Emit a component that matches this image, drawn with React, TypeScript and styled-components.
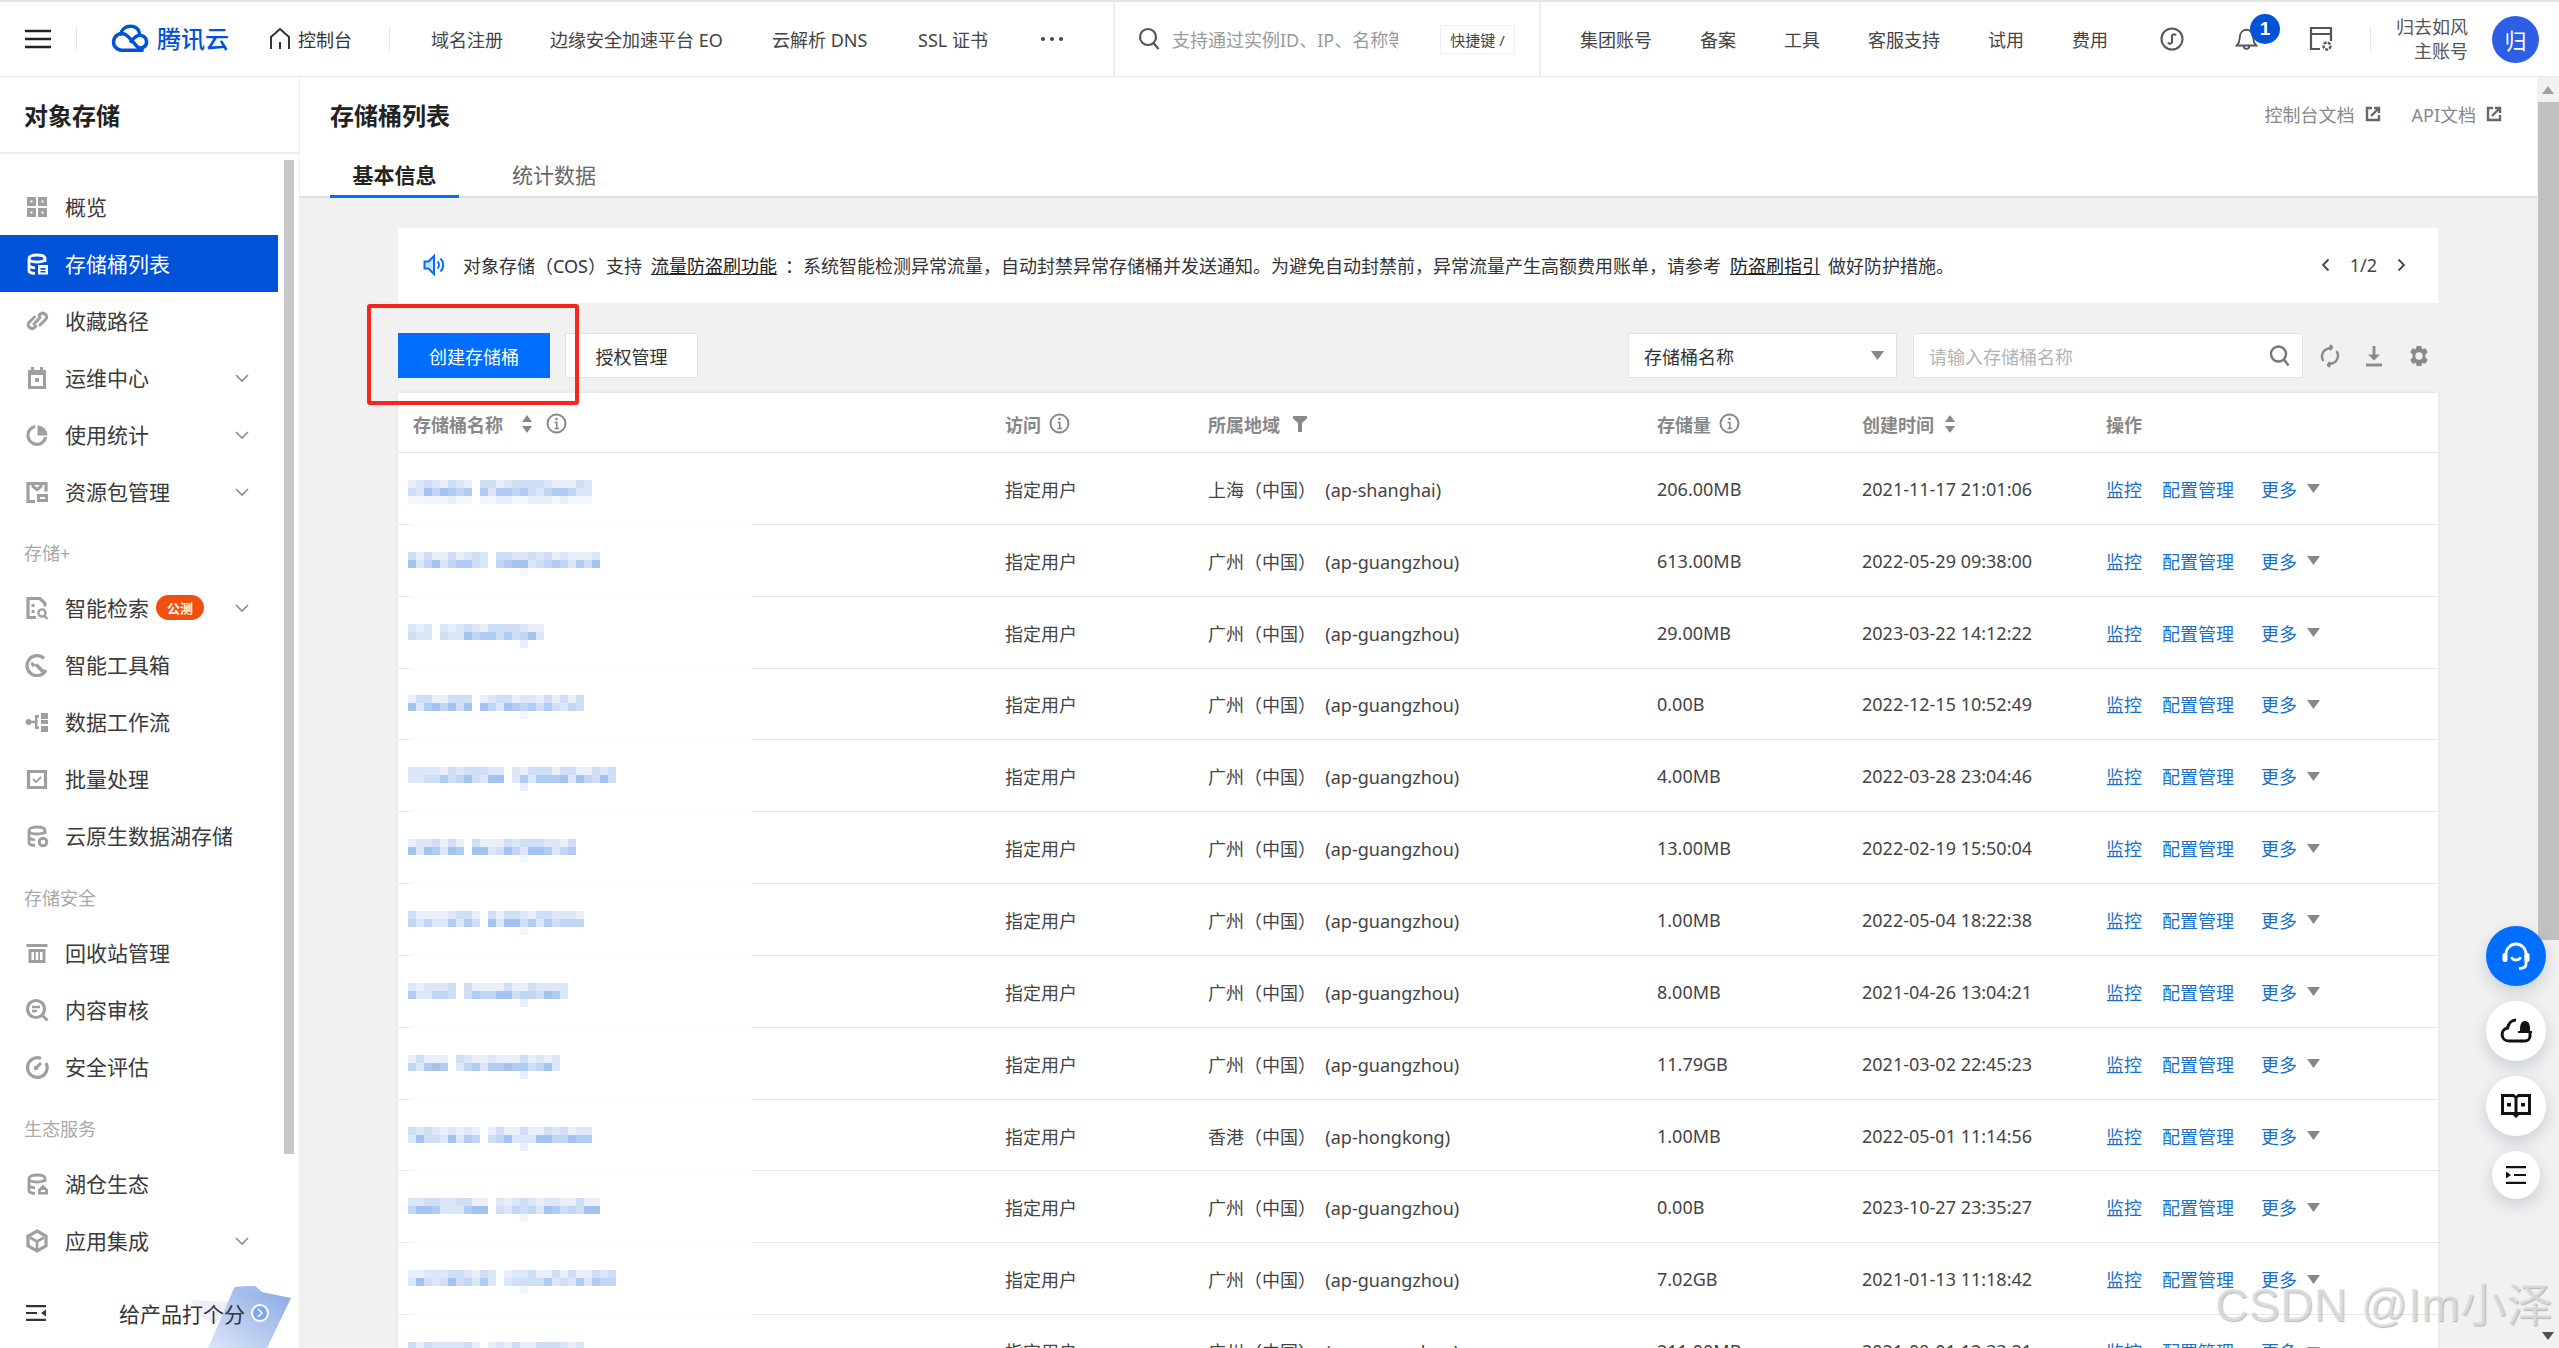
import React from "react";
import styled, { createGlobalStyle } from "styled-components";

const FONT = `"Noto Sans", "Noto Sans CJK SC", sans-serif`;

const Global = createGlobalStyle`
  html, body { margin: 0; padding: 0; height: 100%; overflow: hidden; background: #fff; }
  body { font-family: ${FONT}; color: #333; }
  * { box-sizing: border-box; }
`;

const Page = styled.div`
  width: 2559px; height: 1348px; display: flex; flex-direction: column; overflow: hidden; position: relative;
`;
const TopStrip = styled.div` height: 2px; background: #e4e4e4; flex: none; `;
const TopBar = styled.header`
  height: 75px; flex: none; display: flex; align-items: center; border-bottom: 1px solid #e9e9e9; background: #fff; font-size: 18px; color: #444;
`;
const MenuBtn = styled.div` width: 76px; display: flex; justify-content: center; color: #222; `;
const Sep = styled.div<{ $ml?: number }>` width: 1px; height: 24px; background: #e8e8e8; margin-left: ${p => p.$ml ?? 0}px; flex: none; `;
const Logo = styled.div` width: 118px; display: flex; align-items: center; margin-left: 34px; gap: 7px; color: #0052d9; font-size: 24px; font-weight: 500; line-height: 1; white-space: nowrap; `;
const HomeLink = styled.div` display: flex; align-items: center; gap: 7px; margin-left: 40px; color: #333; `;
const NavLinks = styled.nav` width: 682px; flex: none; display: flex; align-items: center; margin-left: 41px; white-space: nowrap; `;
const NavLink = styled.span<{ $w: number }>` width: ${p => p.$w}px; flex: none; `;
const Dots = styled.span` display: inline-flex; gap: 5px; margin-left: 2px; i { width: 4px; height: 4px; border-radius: 50%; background: #444; } `;
const SearchZone = styled.div`
  width: 428px; height: 74px; flex: none; border-left: 2px solid #eee; border-right: 2px solid #eee; display: flex; align-items: center; padding-left: 23px; color: #555;
`;
const SearchText = styled.div` width: 226px; margin-left: 12px; overflow: hidden; white-space: nowrap; color: #999; `;
const KeyBox = styled.div` margin-left: 42px; width: 75px; height: 29px; border: 1px solid #eee; font-size: 15px; display: flex; align-items: center; justify-content: center; color: #444; white-space: nowrap; `;
const RightLinks = styled.div` display: flex; align-items: center; gap: 48px; margin-left: 39px; white-space: nowrap; `;
const IconTools = styled.div` display: flex; align-items: center; gap: 51px; margin-left: 52px; color: #555; `;
const BellWrap = styled.div` position: relative; display: flex; `;
const Badge = styled.span`
  position: absolute; left: 15px; top: -13px; width: 30px; height: 30px; border-radius: 50%; background: #0052d9; color: #fff; font-size: 19px; font-weight: 700; display: flex; align-items: center; justify-content: center; font-family: "Liberation Sans", sans-serif;
`;
const UserName = styled.div` margin-left: 25px; width: 72px; text-align: right; line-height: 24px; color: #555; `;
const Avatar = styled.div` margin-left: 24px; width: 47px; height: 47px; border-radius: 50%; background: #2f5ee6; color: #fff; font-size: 22px; display: flex; align-items: center; justify-content: center; `;

const Body = styled.div` flex: 1; display: flex; min-height: 0; `;
const Sidebar = styled.aside` width: 300px; flex: none; display: flex; flex-direction: column; border-right: 1px solid #eee; background: #fff; position: relative; overflow: hidden; `;
const SideHead = styled.div` height: 77px; flex: none; border-bottom: 2px solid #ececec; padding: 0 0 1px 24px; display: flex; align-items: center; font-size: 24px; font-weight: 700; color: #222; `;
const NavRow = styled.div` flex: 1; display: flex; min-height: 0; `;
const NavList = styled.div` width: 278px; flex: none; padding-top: 24px; `;
const SideThumb = styled.div` width: 10px; height: 994px; margin: 6px 0 0 6px; background: #c9c9c9; flex: none; `;
const NavItem = styled.div<{ $active?: boolean }>`
  height: 57px; display: flex; align-items: center; padding: 0 28px 0 26px; font-size: 21px; white-space: nowrap;
  background: ${p => (p.$active ? "#0052d9" : "transparent")};
  color: ${p => (p.$active ? "#fff" : "#3a3a3a")};
  svg.nav { color: ${p => (p.$active ? "#fff" : "#9f9f9f")}; }
`;
const NavLabel = styled.span` position: relative; top: -1px; `;
const NavIconBox = styled.svg` width: 24px; height: 24px; flex: none; margin-right: 16px; margin-left: -1px; `;
const NavChevron = styled.svg` width: 16px; height: 10px; margin-left: auto; color: #8c8c8c; flex: none; `;
const GroupLabel = styled.div<{ $h: number }>` height: ${p => p.$h}px; padding: 5px 0 0 24px; display: flex; align-items: center; font-size: 18px; color: #a9a9a9; `;
const Beta = styled.span` margin-left: 7px; width: 48px; height: 25px; border-radius: 13px; background: #ef4f10; color: #fff; font-size: 13px; font-weight: 700; display: flex; align-items: center; justify-content: center; `;
const SideFoot = styled.div` height: 70px; flex: none; display: flex; align-items: center; padding-left: 26px; position: relative; color: #333; font-size: 21px; `;
const FootMenu = styled.svg` position: relative; flex: none; `;
const FootLabel = styled.span` margin-left: 73px; position: relative; white-space: nowrap; `;
const FootArrow = styled.span` position: relative; margin-left: 6px; width: 18px; height: 18px; border-radius: 50%; border: 2px solid #fff; background: #7ea6ee; color: #fff; display: flex; align-items: center; justify-content: center; `;
const FootArt = styled.svg` position: absolute; left: 170px; top: 0; width: 129px; height: 70px; `;

const Main = styled.main` flex: 1; min-width: 0; background: #f1f1f1; display: flex; flex-direction: column; `;
const MainHead = styled.div` flex: none; background: #fff; border-bottom: 2px solid #dedede; height: 121px; display: flex; flex-direction: column; `;
const TitleRow = styled.div` height: 76px; flex: none; display: flex; align-items: center; padding: 0 35px 2px 30px; `;
const PageTitle = styled.h1` margin: 0; font-size: 24px; font-weight: 700; color: #222; `;
const DocLinks = styled.div` margin-left: auto; display: flex; align-items: center; gap: 31px; font-size: 18px; color: #888; `;
const DocLink = styled.span` display: flex; align-items: center; gap: 10px; `;
const Tabs = styled.div` flex: 1; display: flex; padding-left: 30px; `;
const Tab = styled.div<{ $active?: boolean }>`
  width: ${p => (p.$active ? 129 : 130)}px; margin-left: ${p => (p.$active ? 0 : 30)}px; height: 45px; display: flex; align-items: center; justify-content: center; font-size: 21px;
  font-weight: ${p => (p.$active ? 700 : 400)};
  color: ${p => (p.$active ? "#222" : "#666")};
  border-bottom: 3px solid ${p => (p.$active ? "#006eff" : "transparent")};
`;
const Content = styled.div` flex: 1; min-height: 0; padding: 30px 99px 0 98px; overflow: hidden; `;
const Notice = styled.div` height: 75px; background: #fff; display: flex; align-items: center; padding: 0 32px 2px 25px; font-size: 18px; color: #333; white-space: nowrap; `;
const NoticeText = styled.span` margin-left: 16px; a { color: #222; text-decoration: underline; margin: 0 8px 0 9px; } `;
const Pager = styled.div` margin-left: auto; display: flex; align-items: center; gap: 20px; color: #444; `;
const Toolbar = styled.div` margin-top: 30px; height: 45px; display: flex; align-items: center; position: relative; font-size: 18px; `;
const Highlight = styled.div` position: absolute; left: -31px; top: -29px; width: 212px; height: 101px; border: 4px solid #f4261e; border-radius: 3px; z-index: 3; pointer-events: none; `;
const PrimaryBtn = styled.div` width: 152px; height: 45px; background: #006eff; color: #fff; display: flex; align-items: center; justify-content: center; `;
const GhostBtn = styled.div` margin-left: 15px; width: 133px; height: 45px; background: #fff; border: 1px solid #e3e3e3; display: flex; align-items: center; justify-content: center; color: #333; `;
const SelectBox = styled.div` margin-left: auto; width: 269px; height: 45px; background: #fff; border: 1px solid #e3e3e3; display: flex; align-items: center; padding: 0 12px 0 15px; justify-content: space-between; color: #333; `;
const SearchBox = styled.div` margin-left: 16px; width: 390px; height: 45px; background: #fff; border: 1px solid #e3e3e3; display: flex; align-items: center; padding: 0 12px 0 15px; justify-content: space-between; color: #b4b4b4; `;
const ToolIcons = styled.div` margin: 0 8px 0 17px; display: flex; align-items: center; gap: 24px; color: #8a8a8a; `;
const TriDown = styled.svg` width: 13px; height: 9px; color: #888; flex: none; `;

const COLS = "592px 203px 449px 205px 244px 347px";
const Table = styled.div` margin-top: 15px; background: #fff; box-shadow: 0 0 4px rgba(0,0,0,.08); `;
const HeadRow = styled.div` height: 60px; display: grid; grid-template-columns: ${COLS}; align-items: center; border-bottom: 1px solid #e2e2e2; font-size: 18px; font-weight: 700; color: #888; `;
const HeadCell = styled.div` display: flex; align-items: center; padding: 2px 0 0 15px; white-space: nowrap; `;
const HeadIcon = styled.svg<{ $ml: number }>` margin-left: ${p => p.$ml}px; color: #888; flex: none; `;
const Row = styled.div`
  height: 71.85px; display: grid; grid-template-columns: ${COLS}; align-items: center; font-size: 18px; color: #444;
  background: linear-gradient(to right, #e6e6e6 12px, #fafafa 12px, #fafafa 354px, #e6e6e6 354px) left bottom / 100% 1px no-repeat;
`;
const Cell = styled.div` padding-left: 15px; white-space: nowrap; `;
const NameCell = styled.div` padding: 6px 0 0 10px; display: flex; align-items: center; `;
const Ops = styled.div` padding-left: 15px; display: flex; align-items: center; color: #1a6fc9; white-space: nowrap; `;
const OpLink = styled.span<{ $ml?: number }>` margin-left: ${p => p.$ml ?? 0}px; `;
const MoreTri = styled(TriDown)` margin-left: 10px; `;

const Scroll = styled.div` width: 22px; flex: none; background: #f1f1f1; display: flex; flex-direction: column; align-items: center; `;
const ScrollBtn = styled.div` height: 25px; flex: none; display: flex; align-items: center; justify-content: center; `;
const ScrollThumb = styled.div` width: 21px; margin-left: 1px; height: 838px; background: #c1c1c1; flex: none; `;
const ScrollRest = styled.div` flex: 1; `;
const Float = styled.div` position: absolute; left: 2486px; top: 926px; width: 60px; display: flex; flex-direction: column; align-items: center; gap: 15px; z-index: 4; `;
const FloatBtn = styled.div<{ $size: number; $primary?: boolean }>`
  width: ${p => p.$size}px; height: ${p => p.$size}px; border-radius: 50%; display: flex; align-items: center; justify-content: center;
  background: ${p => (p.$primary ? "#006eff" : "#fff")}; color: ${p => (p.$primary ? "#fff" : "#111")};
  box-shadow: 0 6px 16px rgba(60,80,120,.22);
`;
const Watermark = styled.div`
  position: absolute; right: 6px; top: 1277px; font-family: "Liberation Sans", "Noto Sans CJK SC", sans-serif; font-size: 46px; line-height: 56px; white-space: nowrap; letter-spacing: 0.5px;
  color: rgba(228,228,228,.72); text-shadow: 1px 1px 1px rgba(120,120,120,.5); pointer-events: none; z-index: 5;
`;

const mosaicBlues = ["#f3f6fc", "#e9f0fb", "#dce8f9", "#cfdff7", "#c1d6f4", "#b0cbf1", "#a3c2ef"];
const Mosaic = ({ width, seed, gapAt, tail }: { width: number; seed: number; gapAt: number; tail: boolean }) => {
  const cols = Math.ceil(width / 8);
  let s = seed * 7919 + 13;
  const rnd = () => { s = (s * 16807) % 2147483647; return (s % 1000) / 1000; };
  const rects: React.ReactNode[] = [];
  for (let c = 0; c < cols; c++) {
    if (c === gapAt) continue;
    for (let r = 0; r < 3; r++) {
      const strong = r === 1 ? 2 + rnd() * 5 : r === 0 ? 1 + rnd() * 3 : rnd() * 1.5;
      if (r === 2 && !tail && c !== 14) continue;
      const col = mosaicBlues[Math.min(6, Math.floor(strong))];
      rects.push(<rect key={`${c}-${r}`} x={c * 8} y={r * 8} width="8" height="8" fill={col} />);
    }
  }
  return <svg width={width} height={24} viewBox={`0 0 ${width} 24`} shapeRendering="crispEdges">{rects}</svg>;
};

const Chevron = () => (
  <NavChevron viewBox="0 0 16 10" fill="none" stroke="currentColor" strokeWidth="1.6"><path d="M2 2l6 6 6-6" /></NavChevron>
);
const Tri = () => <path d="M0 0h13L6.5 9z" fill="currentColor" />;
const SortIcon = ({ ml }: { ml: number }) => (
  <HeadIcon $ml={ml} width="12" height="20" viewBox="0 0 12 20" fill="currentColor"><path d="M6 1l5 7H1zM6 19l-5-7h10z" /></HeadIcon>
);
const InfoIcon = ({ ml }: { ml: number }) => (
  <HeadIcon $ml={ml} width="21" height="21" viewBox="0 0 21 21" fill="none" stroke="currentColor" strokeWidth="2"><circle cx="10.5" cy="10.5" r="9" /><path d="M8.5 9.5h2.3v6M8.5 15.5h4.5" strokeWidth="1.6" /><circle cx="10.5" cy="6" r="1.3" fill="currentColor" stroke="none" /></HeadIcon>
);
const FilterIcon = () => (
  <HeadIcon $ml={13} width="14" height="16" viewBox="0 0 14 16" fill="currentColor"><path d="M0 0h14v2.5L9 7v9H5V7L0 2.5z" /></HeadIcon>
);
const ExtIcon = () => (
  <svg width="16" height="16" viewBox="0 0 16 16" fill="none" stroke="#666" strokeWidth="2.4"><path d="M7 2H2v12h12V9" /><path d="M6 10l8-8M9 2h5v5" /></svg>
);

const Cyl = () => (
  <path d="M12 3c5 0 8 1.300 8 3.500V10M4 6.500C4 4.300 7 3 12 3M4 6.500V19c0 1.300 2.500 2.300 6 2.500M4 6.500c0 2 3 3.500 8 3.500s8-1.500 8-3.500M4 12.500c0 1.700 2.500 3 6 3.300" fill="none" stroke="currentColor" strokeWidth="2.800" />
);
const navIcons: Record<string, React.ReactNode> = {
  grid: (<g fill="currentColor"><path fillRule="evenodd" d="M2 2h9v9H2zM5.500 5.500v2h2v-2zM13 2h9v9h-9zM16.500 5.500v2h2v-2zM2 13h9v9H2zM5.500 16.500v2h2v-2zM13 13h9v9h-9zM16.500 16.500v2h2v-2z" /></g>),
  bucket: (<g><Cyl /><path fill="currentColor" fillRule="evenodd" d="M13 13h10v9.500H13zM15.500 16v1.800h5V16zM15.500 19v1.600h5V19z" /></g>),
  link: (<path d="M14 6.500l1.500-1.500a3.800 3.800 0 0 1 5.300 5.300L15 16M9.500 8L4 13.500a3.800 3.800 0 0 0 5.300 5.300l1.500-1.500M9 15l6-6.500" fill="none" stroke="currentColor" strokeWidth="3" strokeLinecap="round" />),
  calendar: (<g><path fill="currentColor" fillRule="evenodd" d="M3 4h3V1h3v3h6V1h3v3h3v19H3zM6 9v11h12V9z" /><rect x="10" y="12" width="4" height="4" fill="currentColor" /></g>),
  pie: (<g><path d="M10 3.500A9 9 0 1 0 20.700 14" fill="none" stroke="currentColor" strokeWidth="3.200" /><path fill="currentColor" d="M12.500 1.500a10 10 0 0 1 10 10h-10z" transform="translate(0 1)" /></g>),
  pack: (<g><path fill="none" stroke="currentColor" strokeWidth="3.200" d="M10 21.500H3V3.500h18v8" /><path fill="none" stroke="currentColor" strokeWidth="3" d="M8 3.500v3l4 3 4-3v-3" /><path fill="currentColor" fillRule="evenodd" d="M12 14h11v8H12zM15 17v2h5v-2z" /></g>),
  docsearch: (<g><path fill="none" stroke="currentColor" strokeWidth="3.200" d="M11 21.500H3V2.500h12l5 5v3" /><rect x="6.500" y="8" width="3" height="3" fill="currentColor" /><rect x="6.500" y="14" width="3" height="3" fill="currentColor" /><circle cx="17" cy="17" r="3.600" fill="none" stroke="currentColor" strokeWidth="2.400" /><path d="M19.500 20l3 3" stroke="currentColor" strokeWidth="2.400" /></g>),
  tool: (<g><path fill="none" stroke="currentColor" strokeWidth="3.200" d="M19 5.500A10 10 0 1 0 21 17" /><path fill="currentColor" d="M7 8.500l3 3 2.500-1L20 18l-2.500 2.500-7.500-7.500-2.500 1a4 4 0 0 1-.5-5.500z" /></g>),
  flow: (<g fill="currentColor"><circle cx="3.500" cy="12" r="3" /><rect x="3" y="10.700" width="9" height="2.600" /><path d="M10 5h4v2.500h-1.500v9H14V19h-4z" /><rect x="16" y="3" width="7" height="6" /><rect x="16" y="10" width="7" height="4" /><rect x="16" y="16" width="7" height="6" /></g>),
  check: (<g><path fill="none" stroke="currentColor" strokeWidth="3.200" d="M3.500 4.500h17v16h-17z" /><path fill="none" stroke="currentColor" strokeWidth="1.800" d="M8 12l3 3 5-5" /></g>),
  lake: (<g><Cyl /><circle cx="18" cy="18" r="3.800" fill="none" stroke="currentColor" strokeWidth="3" /></g>),
  trash: (<g fill="currentColor"><rect x="1.500" y="3" width="21" height="3" /><path fillRule="evenodd" d="M3.500 8h17v14h-17zM6.500 11v8h2.500v-8zM10.700 11v8h2.600v-8zM15 11v8h2.500v-8z" /></g>),
  review: (<g><circle cx="11" cy="11" r="8.500" fill="none" stroke="currentColor" strokeWidth="3.200" /><path d="M17.500 17.500l5 5" stroke="currentColor" strokeWidth="3" /><path d="M7 9h8M7 13h5" stroke="currentColor" strokeWidth="2.400" /></g>),
  gauge: (<g><path fill="none" stroke="currentColor" strokeWidth="3.200" d="M16 3.500A9.800 9.800 0 1 0 21 8" /><path stroke="currentColor" strokeWidth="3" d="M11 13l5-5" /><circle cx="11" cy="13" r="2.300" fill="currentColor" /></g>),
  home: (<g><Cyl /><path fill="currentColor" fillRule="evenodd" d="M18 12.500l5 5v5H13v-5zM16 18v2h4v-2z" /></g>),
  hex: (<g fill="none" stroke="currentColor" strokeWidth="3.200"><path d="M12 2l9 5.200v9.600L12 22l-9-5.200V7.200z" /><path d="M5 8.500l7 4 7-4M12 12.500V20" strokeWidth="2.600" /></g>),
};
const NavIcon = ({ name }: { name: string }) => (
  <NavIconBox className="nav" viewBox="0 0 24 24">{navIcons[name]}</NavIconBox>
);

type Entry =
  | { label: string; h: number }
  | { icon: string; text: string; active?: boolean; more?: boolean; beta?: boolean };
const nav: Entry[] = [
  { icon: "grid", text: "概览" },
  { icon: "bucket", text: "存储桶列表", active: true },
  { icon: "link", text: "收藏路径" },
  { icon: "calendar", text: "运维中心", more: true },
  { icon: "pie", text: "使用统计", more: true },
  { icon: "pack", text: "资源包管理", more: true },
  { label: "存储+", h: 59 },
  { icon: "docsearch", text: "智能检索", more: true, beta: true },
  { icon: "tool", text: "智能工具箱" },
  { icon: "flow", text: "数据工作流" },
  { icon: "check", text: "批量处理" },
  { icon: "lake", text: "云原生数据湖存储" },
  { label: "存储安全", h: 60 },
  { icon: "trash", text: "回收站管理" },
  { icon: "review", text: "内容审核" },
  { icon: "gauge", text: "安全评估" },
  { label: "生态服务", h: 60 },
  { icon: "home", text: "湖仓生态" },
  { icon: "hex", text: "应用集成", more: true },
];

const GZ = "广州（中国）\u00a0\u00a0(ap-guangzhou)";
const rows = [
  { w: 184, gap: 8, tail: true, region: "上海（中国）\u00a0\u00a0(ap-shanghai)", size: "206.00MB", time: "2021-11-17 21:01:06" },
  { w: 192, gap: 10, tail: false, region: GZ, size: "613.00MB", time: "2022-05-29 09:38:00" },
  { w: 136, gap: 3, tail: false, region: GZ, size: "29.00MB", time: "2023-03-22 14:12:22" },
  { w: 176, gap: 8, tail: false, region: GZ, size: "0.00B", time: "2022-12-15 10:52:49" },
  { w: 208, gap: 12, tail: false, region: GZ, size: "4.00MB", time: "2022-03-28 23:04:46" },
  { w: 168, gap: 7, tail: false, region: GZ, size: "13.00MB", time: "2022-02-19 15:50:04" },
  { w: 176, gap: 9, tail: false, region: GZ, size: "1.00MB", time: "2022-05-04 18:22:38" },
  { w: 160, gap: 6, tail: false, region: GZ, size: "8.00MB", time: "2021-04-26 13:04:21" },
  { w: 152, gap: 5, tail: false, region: GZ, size: "11.79GB", time: "2021-03-02 22:45:23" },
  { w: 184, gap: 9, tail: false, region: "香港（中国）\u00a0\u00a0(ap-hongkong)", size: "1.00MB", time: "2022-05-01 11:14:56" },
  { w: 192, gap: 10, tail: false, region: GZ, size: "0.00B", time: "2023-10-27 23:35:27" },
  { w: 208, gap: 11, tail: false, region: GZ, size: "7.02GB", time: "2021-01-13 11:18:42" },
  { w: 176, gap: 9, tail: false, region: GZ, size: "211.00MB", time: "2021-09-01 12:33:21" },
];

export default function App() {
  return (
    <Page>
      <Global />
      <TopStrip />
      <TopBar>
        <MenuBtn>
          <svg width="26" height="20" viewBox="0 0 26 20" fill="none" stroke="currentColor" strokeWidth="2.4"><path d="M0 2h26M0 10h26M0 18h26" /></svg>
        </MenuBtn>
        <Sep />
        <Logo>
          <svg width="40" height="30" viewBox="0 0 40 30" fill="none" stroke="#0052d9" strokeWidth="3.600" strokeLinecap="round"><path d="M32 26.500H11a8.500 8.500 0 1 1 3-16.500c4 1.500 9 9 12.500 12.500 4 4 10 .5 10-4.500s-5-8-9-6.500c-3 1-5 3.500-7 6" /><path d="M10 10c1-5 5-8 10-8 4.500 0 8 2.500 9 6.500" /></svg>
          <span>腾讯云</span>
        </Logo>
        <HomeLink>
          <svg width="22" height="24" viewBox="0 0 22 24" fill="none" stroke="currentColor" strokeWidth="2"><path d="M2 22V10l9-8 9 8v12M11 15v7" /></svg>
          <span>控制台</span>
        </HomeLink>
        <Sep $ml={37} />
        <NavLinks>
          <NavLink $w={119}>域名注册</NavLink>
          <NavLink $w={222}>边缘安全加速平台 EO</NavLink>
          <NavLink $w={146}>云解析 DNS</NavLink>
          <NavLink $w={121}>SSL 证书</NavLink>
          <Dots><i /><i /><i /></Dots>
        </NavLinks>
        <SearchZone>
          <svg width="22" height="24" viewBox="0 0 22 24" fill="none" stroke="currentColor" strokeWidth="2.200"><circle cx="10" cy="10" r="8" /><path d="M15.500 16l5 6" /></svg>
          <SearchText>支持通过实例ID、IP、名称等</SearchText>
          <KeyBox>快捷键 /</KeyBox>
        </SearchZone>
        <RightLinks>
          <span>集团账号</span>
          <span>备案</span>
          <span>工具</span>
          <span>客服支持</span>
          <span>试用</span>
          <span>费用</span>
        </RightLinks>
        <IconTools>
          <svg width="24" height="24" viewBox="0 0 24 24" fill="none" stroke="currentColor" strokeWidth="2"><circle cx="12" cy="12" r="10.500" /><path d="M8 15.500a2.300 2.300 0 0 0 4 0V8.500a2.300 2.300 0 0 1 4 0" /></svg>
          <BellWrap>
            <svg width="23" height="24" viewBox="0 0 23 26" fill="none" stroke="currentColor" strokeWidth="2"><path d="M1 20c2-2 3-3 3-7 0-6 3-10 7.500-10S19 7 19 13c0 4 1 5 3 7zM8.500 20c0 5 6 5 6 0" /></svg>
            <Badge>1</Badge>
          </BellWrap>
          <svg width="24" height="28" viewBox="0 0 24 28" fill="none" stroke="currentColor" strokeWidth="2.200"><path d="M11 24H2V3h20v13M2 9h20" /><circle cx="18" cy="21" r="3.500" strokeWidth="2.400" strokeDasharray="3 1.200" /></svg>
        </IconTools>
        <Sep $ml={37} />
        <UserName>归去如风<br />主账号</UserName>
        <Avatar>归</Avatar>
      </TopBar>
      <Body>
        <Sidebar>
          <SideHead>对象存储</SideHead>
          <NavRow>
            <NavList>
              {nav.map((e, i) =>
                "label" in e ? (
                  <GroupLabel key={i} $h={e.h}>{e.label}</GroupLabel>
                ) : (
                  <NavItem key={i} $active={e.active}>
                    <NavIcon name={e.icon} />
                    <NavLabel>{e.text}</NavLabel>
                    {e.beta && <Beta>公测</Beta>}
                    {e.more && <Chevron />}
                  </NavItem>
                )
              )}
            </NavList>
            <SideThumb />
          </NavRow>
          <SideFoot>
            <FootArt viewBox="0 0 129 70">
              <defs>
                <linearGradient id="foot" x1="0" y1="1" x2="1" y2="0">
                  <stop offset="0" stopColor="#dbe6f9" />
                  <stop offset="1" stopColor="#86a6e2" />
                </linearGradient>
              </defs>
              <path d="M20 22l42 2-16 22-14-6z" fill="#eceff6" />
              <path d="M62 15l3-6 20-1 7 6 29 6-24 50H38z" fill="url(#foot)" />
              <path d="M62 15l3-6 20-1 7 6z" fill="#a3bce9" />
            </FootArt>
            <FootMenu width="20" height="16" viewBox="0 0 20 16" fill="#333"><path d="M0 0h20v2.200H0zM0 6.900h11v2.200H0zM0 13.800h20V16H0zM20 4.500v7l-5-3.500z" /></FootMenu>
            <FootLabel>给产品打个分</FootLabel>
            <FootArrow>
              <svg width="8" height="10" viewBox="0 0 8 10" fill="none" stroke="currentColor" strokeWidth="1.500"><path d="M2 1l4 4-4 4" /></svg>
            </FootArrow>
          </SideFoot>
        </Sidebar>
        <Main>
          <MainHead>
            <TitleRow>
              <PageTitle>存储桶列表</PageTitle>
              <DocLinks>
                <DocLink>控制台文档<ExtIcon /></DocLink>
                <DocLink>API文档<ExtIcon /></DocLink>
              </DocLinks>
            </TitleRow>
            <Tabs>
              <Tab $active>基本信息</Tab>
              <Tab>统计数据</Tab>
            </Tabs>
          </MainHead>
          <Content>
            <Notice>
              <svg width="24" height="24" viewBox="0 0 24 24" fill="none" stroke="#006eff" strokeWidth="2"><path d="M1.500 8.500h4L11 3v18l-5.500-5.500h-4z" fill="#cfe2ff" /><path d="M14.500 8.500a5 5 0 0 1 0 7M17.500 5.500a9 9 0 0 1 0 13" /></svg>
              <NoticeText>
                对象存储（COS）支持<a>流量防盗刷功能</a>：系统智能检测异常流量，自动封禁异常存储桶并发送通知。为避免自动封禁前，异常流量产生高额费用账单，请参考<a>防盗刷指引</a>做好防护措施。
              </NoticeText>
              <Pager>
                <svg width="9" height="14" viewBox="0 0 9 14" fill="none" stroke="currentColor" strokeWidth="1.800"><path d="M7.500 1.500L2 7l5.500 5.500" /></svg>
                <span>1/2</span>
                <svg width="9" height="14" viewBox="0 0 9 14" fill="none" stroke="currentColor" strokeWidth="1.800"><path d="M1.500 1.500L7 7l-5.500 5.500" /></svg>
              </Pager>
            </Notice>
            <Toolbar>
              <Highlight />
              <PrimaryBtn>创建存储桶</PrimaryBtn>
              <GhostBtn>授权管理</GhostBtn>
              <SelectBox>
                <span>存储桶名称</span>
                <TriDown viewBox="0 0 13 9"><Tri /></TriDown>
              </SelectBox>
              <SearchBox>
                <span>请输入存储桶名称</span>
                <svg width="21" height="24" viewBox="0 0 21 24" fill="none" stroke="#777" strokeWidth="2.400"><circle cx="9.500" cy="10" r="7.500" /><path d="M15 15.500l4.500 6" /></svg>
              </SearchBox>
              <ToolIcons>
                <svg width="20" height="24" viewBox="0 0 20 24" fill="none" stroke="currentColor" strokeWidth="2.400"><path d="M3.500 17a8 8 0 0 1 5-12.500l3-1.500M16.500 7a8 8 0 0 1-5 12.500l-3 1.500" /><path d="M10 1l2 2-2 3M10 23l-2-2 2-3" /></svg>
                <svg width="20" height="24" viewBox="0 0 20 24" fill="none" stroke="currentColor" strokeWidth="2.800"><path d="M10 2v13" /><path d="M4 10.500l6 6 6-6" fill="currentColor" stroke="none" /><path d="M2 21h16" /></svg>
                <svg width="22" height="24" viewBox="0 0 24 24" fill="currentColor"><path fillRule="evenodd" d="M9.500 1h5l1 3.500 3.500-1 2.500 4.300-2.500 2.700.0 3 2.500 2.700-2.500 4.300-3.500-1-1 3.500h-5l-1-3.500-3.500 1L2.500 16.200 5 13.500v-3L2.500 7.800 5 3.500l3.500 1zM12 8a4 4 0 1 0 0 8 4 4 0 0 0 0-8z" /></svg>
              </ToolIcons>
            </Toolbar>
            <Table>
              <HeadRow>
                <HeadCell>存储桶名称<SortIcon ml={18} /><InfoIcon ml={13} /></HeadCell>
                <HeadCell>访问<InfoIcon ml={8} /></HeadCell>
                <HeadCell>所属地域<FilterIcon /></HeadCell>
                <HeadCell>存储量<InfoIcon ml={8} /></HeadCell>
                <HeadCell>创建时间<SortIcon ml={10} /></HeadCell>
                <HeadCell>操作</HeadCell>
              </HeadRow>
              {rows.map((r, i) => (
                <Row key={i}>
                  <NameCell><Mosaic width={r.w} seed={i + 1} gapAt={r.gap} tail={r.tail} /></NameCell>
                  <Cell>指定用户</Cell>
                  <Cell>{r.region}</Cell>
                  <Cell>{r.size}</Cell>
                  <Cell>{r.time}</Cell>
                  <Ops>
                    <OpLink>监控</OpLink>
                    <OpLink $ml={20}>配置管理</OpLink>
                    <OpLink $ml={27}>更多</OpLink>
                    <MoreTri viewBox="0 0 13 9"><Tri /></MoreTri>
                  </Ops>
                </Row>
              ))}
            </Table>
          </Content>
        </Main>
        <Scroll>
          <ScrollBtn><svg width="12" height="8" viewBox="0 0 12 8" fill="#a0a0a0"><path d="M6 0l6 8H0z" /></svg></ScrollBtn>
          <ScrollThumb />
          <ScrollRest />
          <ScrollBtn><svg width="12" height="8" viewBox="0 0 12 8" fill="#505050"><path d="M6 8L0 0h12z" /></svg></ScrollBtn>
        </Scroll>
      </Body>
      <Float>
        <FloatBtn $size={60} $primary>
          <svg width="32" height="32" viewBox="0 0 32 32" fill="none" stroke="currentColor" strokeWidth="2.800"><path d="M6 14a10 10 0 0 1 20 0v10c0 3-3 4.500-7 4.500" /><rect x="2.500" y="13" width="5" height="9" rx="2" fill="currentColor" stroke="none" /><rect x="24.500" y="13" width="5" height="9" rx="2" fill="currentColor" stroke="none" /><path d="M11.500 17c1 4 8 4 9 0" /></svg>
        </FloatBtn>
        <FloatBtn $size={60}>
          <svg width="32" height="28" viewBox="0 0 32 28" fill="none" stroke="currentColor" strokeWidth="3"><path d="M22 24H8.500a6.500 6.500 0 0 1-1-12.900C8.500 6 12 3 16 3" /><path d="M30 16v3a5 5 0 0 1-5 5h-4" /><path d="M20 14c0-4 0-10 5-10s5 6 5 10z" fill="currentColor" stroke="none" /><path d="M18 15h14" strokeWidth="2" /></svg>
        </FloatBtn>
        <FloatBtn $size={60}>
          <svg width="30" height="26" viewBox="0 0 30 26" fill="currentColor"><path fillRule="evenodd" d="M0 1h13l2 2 2-2h13v21H18l-3 3-3-3H0zM3 4v15h10.500V5L12 4zM18 4l-1.500 1v14H27V4z" /><rect x="6" y="10" width="4" height="3.500" /><rect x="20" y="10" width="4" height="3.500" /></svg>
        </FloatBtn>
        <FloatBtn $size={48}>
          <svg width="20" height="18" viewBox="0 0 20 18" fill="currentColor"><path d="M0 0h20v2.200H0zM8 7.900h12v2.200H8zM0 15.800h20V18H0zM0 5.500v7L5 9z" /></svg>
        </FloatBtn>
      </Float>
      <Watermark>CSDN @Im小泽</Watermark>
    </Page>
  );
}
